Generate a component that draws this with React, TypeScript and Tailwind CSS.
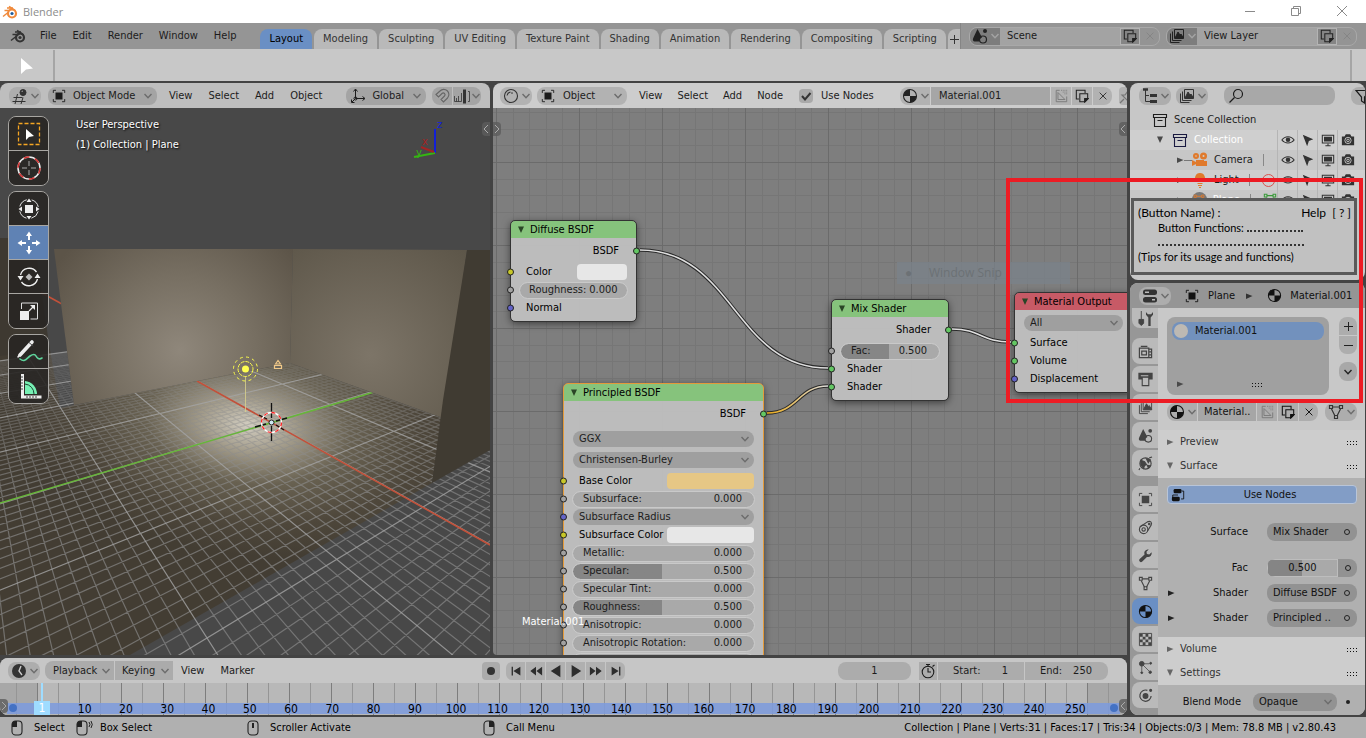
import React from "react";

/* ---------- icons (16 x 16 grid) ---------- */

const ICONS: Record<string, React.ReactNode> = {
  view3d: (
    <g fill="none" stroke="currentColor">
      <path d="M1.500 9.500h9M.5 13.500h13M5.500 6 3 16M11 9.500 9 16" />
      <circle cx="11" cy="4.500" r="3" fill="currentColor" />
      <path d="M9.500 4a2 2 0 0 1 1.500-1" stroke="#bbb" strokeWidth="0.8" />
    </g>
  ),
  object: (
    <g>
      <rect x="4" y="4" width="8" height="8" fill="currentColor" />
      <path d="M1.500 4.500v-3h3M11.500 1.500h3v3M14.500 11.500v3h-3M4.500 14.500h-3v-3" fill="none" stroke="currentColor" />
    </g>
  ),
  axes: (
    <g fill="none" stroke="currentColor">
      <path d="M5.500 1.500v9M5.500 10.500h9M5.500 10.500 2 14M3.500 3.500l2-2.500 2 2.500M12.500 8.500l2.500 2-2.500 2M1.500 11.500v3h3" />
      <circle cx="5.500" cy="10.500" r="1.500" />
    </g>
  ),
  magnet: (
    <g fill="none" stroke="currentColor" strokeWidth="1.1">
      <path d="M2 6.500 6 3a5 5 0 0 1 7.500 7L9.500 14l-2.500-2.500L10.500 8A1.600 1.600 0 0 0 8 5.500L4.500 9z" />
    </g>
  ),
  snap: (
    <g fill="none" stroke="currentColor">
      <path d="M14 3.500h1.500v10H14M.5 8v5.500h7V5M2.500 10v3.500M4.500 8v5.500" strokeWidth=".8" />
      <path d="M10.500 1.500v14" strokeWidth="3" />
    </g>
  ),
  shader: (
    <g fill="none" stroke="currentColor" strokeWidth="1.100">
      <circle cx="8" cy="8" r="6.500" />
      <path d="M4 7.500A4.500 4.500 0 0 1 7.500 4" />
      <circle cx="9" cy="5" r=".3" />
    </g>
  ),
  material: (
    <g>
      <circle cx="8" cy="8" r="6.500" fill="none" stroke="currentColor" strokeWidth="1.100" />
      <path d="M8 8V1.500A6.500 6.500 0 0 0 1.500 8zM8 8h6.500A6.500 6.500 0 0 1 8 14.500z" fill="currentColor" />
    </g>
  ),
  scene: (
    <g>
      <path d="M5.500 1 10 9.500a4 4 0 0 0-2.500 4H3.500c-3 0-3-2-2-4z" fill="currentColor" />
      <circle cx="11" cy="11.500" r="3.500" fill="none" stroke="currentColor" strokeWidth="1.200" />
      <circle cx="13" cy="3" r="2" fill="currentColor" />
    </g>
  ),
  layers: (
    <g fill="none" stroke="currentColor">
      <path d="M5.500 1.500h9v9h-9zM3.500 3.500v9h9M1.500 5.500v9h9" />
      <path d="m6 10 3-6 2 3 1-1 2.500 4z" fill="currentColor" />
    </g>
  ),
  copy: (
    <g fill="none" stroke="currentColor" strokeWidth="1.200">
      <path d="M4.500 11.500h-3v-10h10v3" />
      <path d="M5.500 5.500h9v6l-3 3h-6z" />
      <path d="M11 15v-4h4z" fill="currentColor" />
    </g>
  ),
  page: (
    <g fill="none" stroke="currentColor">
      <path d="M2.500 1.500v13h12v-6M2.500 1.500h4M4.500 4v8h8z" />
      <path d="M8 1.500h7M10 3.500h5M12 5.500h3" strokeDasharray="1 1" />
    </g>
  ),
  x: <path d="m3.500 3.500 9 9M12.500 3.500l-9 9" fill="none" stroke="currentColor" strokeWidth="1.300" />,
  pin: <path d="m8 1 6 6M9 3 6 7H3l6 6V9l4-3M5 11l-4 4" fill="none" stroke="currentColor" strokeWidth="1.200" />,
  tree: (
    <g fill="none" stroke="currentColor">
      <path d="M1 1.500h5" strokeWidth="2.500" />
      <path d="M3.500 2v11.500H8M3.500 7.500H7" />
      <path d="M8 7.500h7M8 13.500h7" strokeWidth="3" />
    </g>
  ),
  search: (
    <g fill="none" stroke="currentColor" strokeWidth="1.200">
      <circle cx="10" cy="6" r="4.500" />
      <path d="M6.500 9.500 1.500 14.500" />
    </g>
  ),
  filter: <path d="M1 2.500h14L9.500 9v6l-3-2V9z" fill="none" stroke="currentColor" strokeWidth="1.200" />,
  box: (
    <g fill="none" stroke="currentColor" strokeWidth="1.100">
      <path d="M1.500 2.500h13v3h-13zM2.500 5.500v9h11v-9M5.500 8.500h5" />
    </g>
  ),
  eye: (
    <g>
      <path d="M1 8c3.500-5 10.500-5 14 0-3.500 4.500-10.500 4.500-14 0z" fill="none" stroke="currentColor" strokeWidth="1.200" />
      <circle cx="8" cy="7.700" r="2.600" fill="currentColor" />
    </g>
  ),
  cursor: <path d="M2 2l12 5-5 2-2 6z" fill="currentColor" />,
  screen: (
    <g fill="none" stroke="currentColor" strokeWidth="1.200">
      <path d="M1.500 2.500h13v9h-13z" />
      <path d="M4 5h8v4H4z" fill="currentColor" />
      <path d="M5 14.500h6M8 12v2" />
    </g>
  ),
  camera: (
    <g>
      <path d="M1 4h3l1.500-2.500h5L12 4h3v10H1z" fill="currentColor" />
      <circle cx="8" cy="8.500" r="3.600" fill="none" stroke="#ccc" />
      <circle cx="8" cy="8.500" r="1.500" fill="none" stroke="#ccc" />
    </g>
  ),
  movie: (
    <g fill="currentColor">
      <circle cx="4" cy="4" r="3" />
      <circle cx="11.500" cy="4" r="3.500" />
      <path d="M4 8h8v6H4zM0 8l4 2v2l-4 2zM12 9h3v5h-3z" />
      <circle cx="4" cy="4" r=".8" fill="#ccc" />
      <circle cx="11.500" cy="4" r="1" fill="#ccc" />
    </g>
  ),
  bulb: (
    <g fill="currentColor">
      <path d="M8 1a5 5 0 0 1 3 9H5a5 5 0 0 1 3-9zM5.500 11h5v1h-5zM6 13h4v1H6zM7 15h2v1H7z" />
    </g>
  ),
  props: (
    <g fill="currentColor">
      <rect x="1" y="1.500" width="14" height="5.500" rx="2.500" />
      <rect x="1" y="9" width="14" height="5.500" rx="2.500" />
      <path d="M3 3.500h4v1.500H3zM10 11h3v1.500h-3z" fill="#bbb" />
    </g>
  ),
  tools: (
    <g>
      <path d="M3.500 0v9M1 9h5v4l-2.500 2.500L1 13z" fill="currentColor" stroke="currentColor" />
      <path d="M8.500 1v3l2.500 3v9h2.500V7L16 4V1l-2 2.500h-3.500z" fill="currentColor" />
    </g>
  ),
  render: (
    <g fill="none" stroke="currentColor" strokeWidth="1.300">
      <path d="M1.500 4.500h10v10h-10zM3 2.500h7M11.500 5.500h3v9h-3M12 8.500h2M12 11.500h2" />
      <path d="M4 7.500h5v4H4z" />
    </g>
  ),
  printer: (
    <g fill="none" stroke="currentColor" strokeWidth="1.200">
      <path d="M1 1.500h14v6H1z" fill="currentColor" />
      <path d="M4.500 5.500h7v9h-7z" fill="#bbb" />
      <path d="M3 4h8" stroke="#bbb" />
    </g>
  ),
  world: (
    <g fill="none" stroke="currentColor" strokeWidth="1.200">
      <circle cx="8" cy="8" r="6" />
      <path d="M3 4.500 7 6l2 3-2 1-1 3-3-4zM9 3l4 1-2 3zM10 10l3 .5-2 2zM12 2l3-1M2 13l-1 2" fill="currentColor" />
    </g>
  ),
  constraint: (
    <g fill="none" stroke="currentColor" strokeWidth="1.200">
      <circle cx="6" cy="10" r="4.500" />
      <circle cx="6" cy="10" r="1.800" />
      <path d="M2 7.500 10 2c3-1.500 5.500.5 4 3.500L10 12" />
      <circle cx="12" cy="4.200" r=".8" />
    </g>
  ),
  wrench: <path d="M10 1.500a4 4 0 0 0-3 5.500L1.500 12a2 2 0 0 0 2.800 2.700L9.500 9.500a4 4 0 0 0 5-5L12 7 9.500 6.500 9 4l2.500-2.500z" fill="currentColor" />,
  mesh: (
    <g fill="none" stroke="currentColor" strokeWidth="1.200">
      <path d="M4.500 3h7M3.500 5l3.500 7M12.500 5 9 12" />
      <path d="M1.500 1.500h3v3h-3zM11.500 1.500h3v3h-3zM6.500 11.500h3v3h-3z" />
    </g>
  ),
  checker: (
    <g>
      <path d="M1.500 1.500h13v13h-13z" fill="none" stroke="currentColor" />
      <path d="M2 2h3v3H2zM8 2h3v3H8zM5 5h3v3H5zM11 5h3v3h-3zM2 8h3v3H2zM8 8h3v3H8zM5 11h3v3H5zM11 11h3v3h-3z" fill="currentColor" />
    </g>
  ),
  particles: (
    <g fill="currentColor" stroke="currentColor">
      <circle cx="4" cy="4" r="2.500" />
      <path d="M4 4h8M4 4l8 8M4 4v8" strokeWidth=".8" fill="none" />
      <circle cx="13.500" cy="3.500" r="1" />
      <circle cx="13" cy="13" r="1.300" />
      <circle cx="4" cy="13.500" r="1" />
    </g>
  ),
  physics: (
    <g fill="none" stroke="currentColor" strokeWidth="1.300">
      <path d="M10 2.500a6 6 0 1 0 4 6" />
      <circle cx="8" cy="8.500" r="2.500" fill="currentColor" />
      <circle cx="13.500" cy="2.500" r="1" fill="currentColor" />
    </g>
  ),
  clock: (
    <g>
      <circle cx="8" cy="8" r="7" fill="currentColor" />
      <path d="M10 3 8 8l3 4" fill="none" stroke="#ccc" strokeWidth="1.400" />
    </g>
  ),
  stopwatch: (
    <g fill="none" stroke="currentColor" strokeWidth="1.100">
      <circle cx="8" cy="9" r="5.800" />
      <path d="M8 5v4h3M6 1.500h4M8 2v2M12.500 3.500l2-1.500" />
    </g>
  ),
  nodes: (
    <g fill="currentColor">
      <rect x="3" y="1" width="9" height="5" rx="1.500" />
      <rect x="1" y="10" width="9" height="5" rx="1.500" />
      <path d="M12.500 3.500h2v9h-3M2 12.500V8h6" fill="none" stroke="currentColor" />
    </g>
  ),
};

function Ico({ n, className = "size-4" }: { n: string; className?: string }) {
  return (
    <svg viewBox="0 0 16 16" className={`shrink-0 ${className}`} aria-hidden="true">
      {ICONS[n]}
    </svg>
  );
}

function Chev({ className = "text-[#6c6c6c]" }: { className?: string }) {
  return (
    <svg viewBox="0 0 8 6" className={`h-[6px] w-2 shrink-0 ${className}`} aria-hidden="true">
      <path d="m.5 1 3.500 3.800L7.500 1" fill="none" stroke="currentColor" strokeWidth="1.400" />
    </svg>
  );
}

function Tri({ open, className = "text-[#4a4a4a]" }: { open?: boolean; className?: string }) {
  return (
    <svg viewBox="0 0 8 8" className={`size-2 shrink-0 ${className}`} aria-hidden="true">
      <path d={open ? "M1 .5h6L4 7z" : "M1 1.500v5.500L7.500 4z"} fill="currentColor" />
    </svg>
  );
}

function BlenderLogo({ color }: { color?: boolean }) {
  const main = color ? "#f08a3c" : "#333333";
  return (
    <svg viewBox="0 0 16 14" className="h-[14px] w-4 shrink-0" aria-hidden="true">
      <path d="M1 11.500 8.500 5.500H2.500M5 3h6" fill="none" stroke={main} strokeWidth="1.500" />
      <path d="M7 1.500 13.500 6" stroke={main} strokeWidth="1.800" />
      <circle cx="10" cy="8.500" r="4" fill={color ? "#fff" : "none"} stroke={main} strokeWidth="2.200" />
      <circle cx="10" cy="8.500" r="1.600" fill={color ? "#1e5b9b" : main} />
    </svg>
  );
}

function IconDrop({ n, className = "" }: { n: string; className?: string }) {
  return (
    <button
      aria-label={n}
      className={`flex h-[18px] w-8 shrink-0 items-center justify-center gap-[3px] rounded-lg bg-[#adadad] text-[#333] ${className}`}
    >
      <Ico n={n} />
      <Chev />
    </button>
  );
}

function Pick({ label, value, className = "", pad = "pl-2" }: { label: string; value: string; className?: string; pad?: string }) {
  return (
    <span className={`relative flex items-center ${className}`}>
      <select aria-label={label} defaultValue={value} className={`size-full appearance-none bg-transparent outline-none ${pad}`}>
        <option>{value}</option>
      </select>
      <Chev className="pointer-events-none absolute right-[5px] text-[#6c6c6c]" />
    </span>
  );
}

/* ---------- top bars ---------- */

function TitleBar() {
  return (
    <header className="flex h-[23px] shrink-0 items-center bg-white pl-[2px] font-['Open_Sans',sans-serif] text-[11px] text-[#8c8c8c]">
      <BlenderLogo color />
      <span className="pl-[5px]">Blender</span>
      <div className="ml-auto flex items-center gap-9 pr-[19px] pb-[2px] text-[#8a8a8a]">
        <button aria-label="Minimize">
          <svg viewBox="0 0 10 10" className="size-[10px]"><path d="M0 5.500h10" stroke="currentColor" /></svg>
        </button>
        <button aria-label="Restore">
          <svg viewBox="0 0 10 10" className="size-[10px]">
            <path d="M.5 2.500h7v7h-7zM2.500 2.500v-2h7v7h-2" fill="none" stroke="currentColor" />
          </svg>
        </button>
        <button aria-label="Close">
          <svg viewBox="0 0 10 10" className="size-[10px]"><path d="m0 0 10 10M10 0 0 10" stroke="currentColor" /></svg>
        </button>
      </div>
    </header>
  );
}

const TABS = ["Layout", "Modeling", "Sculpting", "UV Editing", "Texture Paint", "Shading", "Animation", "Rendering", "Compositing", "Scripting"];

function IdField({ icon, value }: { icon: string; value: string }) {
  return (
    <div className="flex h-[19px] w-[191px] overflow-hidden rounded-lg border border-[#a9a9a9] bg-[#a3a3a3]">
      <button aria-label={`${value} menu`} className="flex w-[30px] items-center justify-center gap-[3px] bg-[#7d7d7d] text-[#222]">
        <Ico n={icon} />
        <Chev className="text-[#a4a4a4]" />
      </button>
      <input aria-label={icon} defaultValue={value} className="min-w-0 flex-1 bg-transparent pl-[7px] outline-none" />
      <button aria-label="Duplicate" className="flex w-5 items-center justify-center border border-[#b4b4b4] bg-[#858585] text-[#222]">
        <Ico n="copy" className="size-[14px]" />
      </button>
      <button aria-label="Remove" className="flex w-[19px] items-center justify-center bg-[#949494] text-[#858585]">
        <Ico n="x" className="size-3" />
      </button>
    </div>
  );
}

function MenuBar() {
  return (
    <div className="flex h-[26px] shrink-0 items-center bg-[#959595] text-[#1c1c1c]">
      <button aria-label="Blender" className="pl-[10px]"><BlenderLogo /></button>
      <nav className="flex gap-4 pl-[14px]">
        {["File", "Edit", "Render", "Window", "Help"].map((m) => (
          <button key={m}>{m}</button>
        ))}
      </nav>
      <div className="ml-6 flex min-w-0 gap-[2px] self-end overflow-hidden" role="tablist">
        {TABS.map((t, i) => (
          <button
            key={t}
            role="tab"
            aria-selected={i === 0}
            className={`h-5 shrink-0 rounded-t-lg px-[9px] whitespace-nowrap ${i === 0 ? "bg-[#6a8fc4] text-black" : "bg-[#b9b9b9] text-[#333]"}`}
          >
            {t}
          </button>
        ))}
        <button aria-label="Add workspace" className="flex h-5 w-[13px] shrink-0 items-center justify-center rounded-tl-lg bg-[#b9b9b9] text-[#333]">
          <svg viewBox="0 0 9 9" className="size-[9px]"><path d="M4.500 0v9M0 4.500h9" stroke="currentColor" /></svg>
        </button>
      </div>
      <div className="ml-auto flex h-full shrink-0 items-center gap-[6px] border-l border-[#858585] pr-[9px] pl-2">
        <IdField icon="scene" value="Scene" />
        <IdField icon="layers" value="View Layer" />
      </div>
    </div>
  );
}

function ToolSettings() {
  return (
    <div className="flex h-8 shrink-0 bg-[#c8c8c8] pt-px">
      <div className="flex w-[55px] items-center justify-center border-r-2 border-[#a5a5a5]">
        <svg viewBox="0 0 12 16" className="h-4 w-3"><path d="M0 0v16l5-4.500 7-1z" fill="#fff" /></svg>
      </div>
      <div className="mr-[14px] ml-auto border-r-2 border-[#a5a5a5]" />
    </div>
  );
}

/* ---------- 3D viewport ---------- */

/* Perspective of the floor grid: corners of a 2 x 2 cell square on screen. */
function project(u: number, v: number): [number, number, number] {
  const [x0, y0, x1, y1, x2, y2, x3, y3] = [207, 638, 423, 507, 271, 422, 102, 473];
  const dx1 = x1 - x2, dx2 = x3 - x2, sx = x0 - x1 + x2 - x3;
  const dy1 = y1 - y2, dy2 = y3 - y2, sy = y0 - y1 + y2 - y3;
  const det = dx1 * dy2 - dx2 * dy1;
  const g = (sx * dy2 - dx2 * sy) / det;
  const h = (dx1 * sy - sx * dy1) / det;
  const s = u / 2, t = (v + 1) / 2;
  const w = g * s + h * t + 1;
  return [(x1 - x0 + g * x1) * s + (x3 - x0 + h * x3) * t + x0, (y1 - y0 + g * y1) * s + (y3 - y0 + h * y3) * t + y0, w];
}

function segment(a: [number, number], b: [number, number]) {
  let p = project(...a);
  let q = project(...b);
  const eps = 0.15;
  if (p[2] < eps && q[2] < eps) return "";
  const mix = (m: number[], n: number[]): [number, number, number] => {
    const k = (eps - m[2]) / (n[2] - m[2]);
    return [m[0] + (n[0] - m[0]) * k, m[1] + (n[1] - m[1]) * k, eps];
  };
  if (p[2] < eps) p = mix(p, q);
  else if (q[2] < eps) q = mix(q, p);
  return `M${(p[0] / p[2]).toFixed(1)} ${(p[1] / p[2]).toFixed(1)}L${(q[0] / q[2]).toFixed(1)} ${(q[1] / q[2]).toFixed(1)}`;
}

let minorGrid = "";
let majorGrid = "";
for (let i = -60; i <= 60; i++) {
  const k = i / 10;
  const d = segment([k, -6], [k, 6]) + segment([-6, k], [6, k]);
  if (i % 10 === 0) majorGrid += d;
  else minorGrid += d;
}

function Scene3D() {
  return (
    <svg viewBox="0 108 490 547" preserveAspectRatio="xMidYMid slice" className="absolute inset-0 size-full" aria-hidden="true">
      <defs>
        <radialGradient id="wallL" gradientUnits="userSpaceOnUse" cx="180" cy="350" r="150">
          <stop offset="0" stopColor="#8f877b" />
          <stop offset=".5" stopColor="#776f62" />
          <stop offset="1" stopColor="#5c5448" />
        </radialGradient>
        <radialGradient id="wallR" gradientUnits="userSpaceOnUse" cx="370" cy="355" r="140">
          <stop offset="0" stopColor="#7d7568" />
          <stop offset="1" stopColor="#5d5649" />
        </radialGradient>
        <radialGradient id="floor" gradientUnits="userSpaceOnUse" cx="0" cy="0" r="1" gradientTransform="translate(248 425) rotate(8) scale(230 130)">
          <stop offset="0" stopColor="#d2cdc0" />
          <stop offset=".2" stopColor="#a39c8b" />
          <stop offset=".45" stopColor="#686151" />
          <stop offset=".75" stopColor="#4e473b" />
          <stop offset="1" stopColor="#433d33" />
        </radialGradient>
        <linearGradient id="depth" gradientUnits="userSpaceOnUse" x1="0" y1="360" x2="0" y2="500">
          <stop offset="0" stopColor="#8c8c8c" stopOpacity=".25" />
          <stop offset="1" stopColor="#8c8c8c" stopOpacity=".65" />
        </linearGradient>
        <clipPath id="ground">
          <path d="M38 258h17l19 147 216-42 153 55-11 65 58-33v205H0V356l46-10z" />
        </clipPath>
      </defs>
      <rect x="0" y="108" width="490" height="547" fill="#484848" />
      <path d="M0 238h34l24 170-58 50z" fill="#3e3931" />
      <path d="M0 356 50 350 60 408 74 405 290 363 443 418 432 483 130 655H0z" fill="url(#floor)" />
      <g clipPath="url(#ground)" fill="none">
        <path d={minorGrid} stroke="url(#depth)" strokeWidth="1.200" />
        <path d={majorGrid} stroke="#a4a4a4" strokeOpacity=".8" strokeWidth="1.200" />
        <path d="M0 503 348 400 374 392" stroke="#67b53a" strokeWidth="1.600" />
        <path d="M197 381 490 545M40 292l22 12" stroke="#c2513a" strokeWidth="1.600" />
      </g>
      <path d="M54 249h239l-3 114L74 405z" fill="url(#wallL)" />
      <path d="M293 249l174 1-24 168-153-55z" fill="url(#wallR)" />
      <path d="M467 250h23v200l-58 33 11-83z" fill="#403b32" />
      <path d="M245.500 376v36" stroke="#d9d28b" strokeWidth=".8" />
      <circle cx="245.500" cy="369" r="3.500" fill="#ffff50" />
      <g fill="none" stroke="#fafa4c">
        <circle cx="245.500" cy="369" r="7.500" strokeDasharray="4 1" />
        <circle cx="245.500" cy="369" r="12" strokeDasharray="3 3.300" />
      </g>
      <path d="M274.500 365.500h7v3h-7zM275.500 364l2.500-3.500 2.500 3.500z" fill="none" stroke="#f0c888" strokeWidth="1.200" />
      <path d="M271.500 403v15M271.500 426v15M255 427l11-3M276 421l11-3M259 415l8 4M276 425l8 5" stroke="#111" strokeWidth="1.300" />
      <circle cx="271.500" cy="422.500" r="10" fill="none" stroke="#fff" strokeWidth="1.300" />
      <circle cx="271.500" cy="422.500" r="10" fill="none" stroke="#f22" strokeWidth="1.300" strokeDasharray="3.900 3.900" />
      <circle cx="271.500" cy="422.500" r="2.500" fill="#cfeaf4" stroke="#222" />
      <g fill="none" strokeWidth="2">
        <path d="M435 153v-24" stroke="#1220d8" />
        <path d="m435 153-21 4" stroke="#35b512" />
        <path d="m434 152-13-5" stroke="#a32424" />
      </g>
      <g fontFamily="DejaVu Sans" fontSize="10">
        <text x="437" y="128" fill="#1220d8">z</text>
        <text x="422" y="145" fill="#a32424">x</text>
        <text x="416" y="156" fill="#35b512">y</text>
      </g>
    </svg>
  );
}

const TOOL_ART: Record<string, React.ReactNode> = {
  "Select Box": (
    <g>
      <path d="M3.500 3.500h21v21h-21z" fill="none" stroke="#f5a623" strokeWidth="1.300" strokeDasharray="4 2" />
      <path d="M11 9v11l3-3 5-1z" fill="#fff" />
    </g>
  ),
  Cursor: (
    <g fill="none">
      <circle cx="14" cy="14" r="11" stroke="#eee" strokeWidth="1.500" />
      <circle cx="14" cy="14" r="11" stroke="#d32f2f" strokeWidth="1.500" strokeDasharray="5.760 5.760" />
      <path d="M14 7v5M14 16v5M7 14h5M16 14h5" stroke="#aaa" />
    </g>
  ),
  Transform: (
    <g>
      <circle cx="14" cy="14" r="9.500" fill="none" stroke="#e4e4e4" strokeDasharray="9.900 5" strokeDashoffset="-2.500" />
      <path d="M10 10h8v8h-8zM11.500 7 14 3.500 16.500 7zM11.500 21 14 24.500 16.500 21zM7 11.500 3.500 14 7 16.500zM21 11.500 24.500 14 21 16.500z" fill="#eee" />
    </g>
  ),
  Move: (
    <g>
      <path d="M11 7 14 2.500 17 7zM11 21 14 25.500 17 21zM7 11 2.500 14 7 17zM21 11 25.500 14 21 17z" fill="#fff" />
      <path d="M14 7v4M14 17v4M7 14h4M17 14h4" stroke="#fff" strokeWidth="2" />
    </g>
  ),
  Rotate: (
    <g>
      <path d="M5.500 12a9 9 0 0 1 16-3M22.500 16a9 9 0 0 1-16 3" fill="none" stroke="#eee" strokeWidth="1.300" />
      <path d="M2.500 13h6L5.500 17.500zM19.500 15h6L22.500 10.500z" fill="#eee" />
      <path d="m14 10.500 3.500 3.500-3.500 3.500-3.500-3.500z" fill="#bbb" />
    </g>
  ),
  Scale: (
    <g>
      <path d="M6.500 12V6h16v16h-7" fill="none" stroke="#ddd" />
      <path d="M5 14h9v9H5zM20 8v5l-5-5z" fill="#eee" />
      <path d="m14 14 5-5" stroke="#eee" strokeWidth="1.300" />
    </g>
  ),
  Annotate: (
    <g fill="none" strokeLinecap="round">
      <path d="M5 17 17 4" stroke="#eee" strokeWidth="3.600" />
      <path d="m14 4.500 4 3.500" stroke="#444" />
      <path d="m3 19 2-3" stroke="#eee" strokeWidth="1.500" />
      <path d="M5 21c5 4 7-1 10-3s5-2 6 0 3 4 6 2" stroke="#5fd49c" strokeWidth="1.600" />
    </g>
  ),
  Measure: (
    <g>
      <path d="M10 9a13 13 0 0 1 12 13H10z" fill="#76f0b4" />
      <path d="M10 12a10 10 0 0 1 9 10" fill="none" stroke="#1d4433" />
      <path d="M7.500 2v23h19" fill="none" stroke="#eee" strokeWidth="3" />
      <path d="M6 5h2M6 8h2M6 11h2M6 14h2M6 17h2M12 26v-2M15 26v-2M18 26v-2M21 26v-2" stroke="#444" />
    </g>
  ),
};

const TOOL_GROUPS = [["Select Box", "Cursor"], ["Transform", "Move", "Rotate", "Scale"], ["Annotate", "Measure"]];

function Toolbar() {
  return (
    <div className="absolute top-2 left-2 flex flex-col gap-[5px]">
      {TOOL_GROUPS.map((g) => (
        <div key={g[0]} className="w-[41px] divide-y divide-[#a8a6a2] overflow-hidden rounded-lg border border-[#a8a6a2]">
          {g.map((t) => (
            <button
              key={t}
              aria-label={t}
              className={`flex h-[34px] w-full items-center justify-center ${t === "Move" ? "bg-[#5f82b4]" : "bg-[#282623]/90"}`}
            >
              <svg viewBox="0 0 28 28" className="size-7">{TOOL_ART[t]}</svg>
            </button>
          ))}
        </div>
      ))}
    </div>
  );
}

function Edge({ side, className }: { side: "left" | "right"; className: string }) {
  return (
    <button
      aria-label={side === "left" ? "Show tools" : "Show sidebar"}
      className={`absolute flex h-[14px] w-2 items-center justify-center bg-[#5c5c5c]/80 ${className}`}
    >
      <svg viewBox="0 0 6 8" className="h-2 w-[6px]">
        <path d={side === "left" ? "m1 0 4 4-4 4" : "M5 0 1 4l4 4"} fill="none" stroke="#aaa" />
      </svg>
    </button>
  );
}

function Viewport() {
  return (
    <section className="flex min-w-0 flex-[490] flex-col overflow-hidden rounded-t-lg">
      <div className="flex h-[25px] shrink-0 items-center bg-[#bebebe] pl-[9px] text-[#1c1c1c]">
        <IconDrop n="view3d" className="bg-[#a4a4a4]" />
        <div className="ml-[7px] flex h-[18px] w-[109px] shrink-0 items-center rounded-lg bg-[#a4a4a4] pl-1">
          <Ico n="object" className="size-[14px]" />
          <Pick label="Mode" value="Object Mode" className="h-full flex-1" pad="pl-[7px]" />
        </div>
        <nav className="flex gap-4 pl-3">
          {["View", "Select", "Add", "Object"].map((m) => (
            <button key={m}>{m}</button>
          ))}
        </nav>
        <div className="ml-6 flex h-[18px] w-20 shrink-0 items-center rounded-lg bg-[#a4a4a4] pl-1">
          <Ico n="axes" />
          <Pick label="Orientation" value="Global" className="h-full flex-1" pad="pl-[6px]" />
        </div>
        <div className="ml-[6px] flex h-[18px] shrink-0 gap-px overflow-hidden rounded-lg">
          <button aria-label="Snap" className="flex w-5 items-center justify-center bg-[#a4a4a4] text-[#666]"><Ico n="magnet" /></button>
          <button aria-label="Snap to" className="flex w-7 items-center justify-center gap-[2px] bg-[#a4a4a4] text-[#333]"><Ico n="snap" /><Chev /></button>
        </div>
      </div>
      <div className="relative min-h-0 flex-1 overflow-hidden">
        <Scene3D />
        <div className="absolute top-[7px] left-[76px] leading-5 text-white [text-shadow:1px_1px_2px_#000]">
          <p>User Perspective</p>
          <p>(1) Collection | Plane</p>
        </div>
        <Toolbar />
        <Edge side="right" className="top-[14px] right-0 rounded-l" />
      </div>
    </section>
  );
}

/* ---------- node editor ---------- */

const SOCKET = { green: "bg-[#63c763]", yellow: "bg-[#c7c729]", gray: "bg-[#a1a1a1]", blue: "bg-[#6363c7]" };
type Sock = keyof typeof SOCKET;

function Socket({ c, out }: { c: Sock; out?: boolean }) {
  return (
    <span className={`absolute top-1/2 size-[7px] -translate-y-1/2 rounded-full border border-[#222] ${SOCKET[c]} ${out ? "-right-1" : "-left-1"}`} />
  );
}

function Node({ title, tone = "bg-[#86c37c]", className, selected, children }: { title: string; tone?: string; className: string; selected?: boolean; children: React.ReactNode }) {
  return (
    <article className={`absolute rounded bg-[#c0c0c0]/95 text-black shadow-[0_2px_8px_rgba(0,0,0,0.6)] outline ${selected ? "outline-[#e39a3a]" : "outline-[#333]"} ${className}`}>
      <h2 className={`flex h-[17px] items-center gap-[5px] rounded-t pl-[6px] ${tone}`}>
        <Tri open className="text-[#2a4527]" />
        {title}
      </h2>
      {children}
    </article>
  );
}

function Out({ label }: { label: string }) {
  return (
    <div className="relative flex h-[25px] items-center justify-end pr-[17px]">
      {label}
      <Socket c="green" out />
    </div>
  );
}

function Plain({ label, c, color }: { label: string; c: Sock; color?: string }) {
  return (
    <div className="relative flex h-[18px] items-center justify-between pr-[9px] pl-[15px]">
      <Socket c={c} />
      <span>{label}</span>
      {color && <button aria-label={`${label} swatch`} className={`h-4 rounded ${color}`} />}
    </div>
  );
}

function NumRow({ label, value, fill, center }: { label: string; value: string; fill?: boolean; center?: boolean }) {
  return (
    <div className="relative flex h-[18px] items-center px-[9px]">
      <Socket c="gray" />
      <label className={`flex h-[15px] w-full items-center rounded-lg text-[#1c1c1c] outline outline-[#c9c9c9] ${center ? "pl-[9px]" : "pl-[10px]"} ${fill ? "bg-linear-to-r from-[#868686] from-49% to-[#a9a9a9] to-49%" : "bg-[#a9a9a9]"}`}>
        <span className="whitespace-nowrap">{label}</span>
        <input defaultValue={value} className={`min-w-0 flex-1 bg-transparent outline-none ${center ? "pl-[3px]" : "pr-3 text-right"}`} />
      </label>
    </div>
  );
}

function DropRow({ value, c, tall }: { value: string; c?: Sock; tall?: boolean }) {
  return (
    <div className={`relative flex items-center px-[9px] ${tall ? "h-[21px]" : "h-[18px]"}`}>
      {c && <Socket c={c} />}
      <Pick label={value} value={value} className="h-4 w-full rounded-lg bg-[#9f9f9f] text-[#1c1c1c]" pad="pl-[6px]" />
    </div>
  );
}

function NodeCanvas() {
  return (
    <div className="relative min-h-0 flex-1 overflow-hidden rounded-bl bg-[#7e7e7e]">
      <svg className="absolute inset-0 size-full" aria-hidden="true">
        <defs>
          <pattern id="ngrid" patternUnits="userSpaceOnUse" x="86" y="54" width="83" height="83">
            <path d="M17.500 0v83M33.500 0v83M50.500 0v83M66.500 0v83M0 17.500h83M0 33.500h83M0 50.500h83M0 66.500h83" stroke="#767676" />
            <path d="M.5 0v83M0 .5h83" stroke="#6b6b6b" />
          </pattern>
          <linearGradient id="sel" x1="0" x2="1">
            <stop offset="0" stopColor="#eaaa18" />
            <stop offset="1" stopColor="#dedede" />
          </linearGradient>
        </defs>
        <rect width="100%" height="100%" fill="url(#ngrid)" />
      </svg>
      <div className="absolute top-[154px] left-[404px] flex h-[22px] w-[173px] items-center bg-[#7a838b]/70 pl-2 font-['Open_Sans',sans-serif] text-xs text-[#6c7175]">
        <span className="w-6">●</span>Window Snip
      </div>

      <Node title="Diffuse BSDF" className="top-[113px] left-[18px] h-[100px] w-[125px]">
        <Out label="BSDF" />
        <Plain label="Color" c="yellow" color="w-[50px] bg-[#e7e7e7]" />
        <NumRow label="Roughness:" value="0.000" center />
        <Plain label="Normal" c="blue" />
      </Node>

      <Node title="Mix Shader" className="top-[192px] left-[339px] h-[100px] w-[116px]">
        <Out label="Shader" />
        <NumRow label="Fac:" value="0.500" fill />
        <Plain label="Shader" c="green" />
        <Plain label="Shader" c="green" />
      </Node>

      <Node title="Material Output" tone="bg-[#c75a66]" className="top-[185px] left-[522px] h-[99px] w-[117px]">
        <div className="pt-[2px] pb-px">
          <DropRow value="All" tall />
        </div>
        <Plain label="Surface" c="green" />
        <Plain label="Volume" c="green" />
        <Plain label="Displacement" c="blue" />
      </Node>

      <Node title="Principled BSDF" selected className="top-[276px] left-[71px] w-[199px] pb-2">
        <Out label="BSDF" />
        <div className="pt-[2px] pb-[2px]">
          <DropRow value="GGX" tall />
          <DropRow value="Christensen-Burley" tall />
        </div>
        <Plain label="Base Color" c="yellow" color="w-[87px] bg-[#e6c785]" />
        <NumRow label="Subsurface:" value="0.000" />
        <DropRow value="Subsurface Radius" c="blue" />
        <Plain label="Subsurface Color" c="yellow" color="w-[87px] bg-[#e7e7e7]" />
        <NumRow label="Metallic:" value="0.000" />
        <NumRow label="Specular:" value="0.500" fill />
        <NumRow label="Specular Tint:" value="0.000" />
        <NumRow label="Roughness:" value="0.500" fill />
        <NumRow label="Anisotropic:" value="0.000" />
        <NumRow label="Anisotropic Rotation:" value="0.000" />
        <NumRow label="Sheen:" value="0.000" />
      </Node>

      <svg className="pointer-events-none absolute inset-0 size-full" aria-hidden="true">
        <g fill="none" stroke="#2a2a2a" strokeWidth="3.600">
          <path d="M147 142C241 142 241 260 335 260" />
          <path d="M274 305C305 305 305 278 335 278" />
          <path d="M459 221C488 221 488 234 518 234" />
        </g>
        <g fill="none" stroke="#dedede" strokeWidth="1.600">
          <path d="M147 142C241 142 241 260 335 260" />
          <path d="M274 305C305 305 305 278 335 278" stroke="url(#sel)" />
          <path d="M459 221C488 221 488 234 518 234" />
        </g>
      </svg>
      <p className="absolute top-[507px] left-[29px] text-white">Material.001</p>
      <Edge side="left" className="top-[14px] left-0 rounded-r" />
      <Edge side="right" className="top-[14px] right-0 rounded-l" />
    </div>
  );
}

function NodeEditor() {
  return (
    <section className="flex min-w-0 flex-[634] flex-col overflow-hidden rounded-t-lg">
      <div className="flex h-[25px] shrink-0 items-center overflow-hidden bg-[#cdcdcd] pl-[7px] text-[#1c1c1c]">
        <IconDrop n="shader" className="bg-[#b2b2b2]" />
        <div className="ml-[5px] flex h-[18px] w-[90px] shrink-0 items-center rounded-lg bg-[#b2b2b2] pl-1">
          <Ico n="object" className="size-[14px]" />
          <Pick label="Shader type" value="Object" className="h-full flex-1" pad="pl-[8px]" />
        </div>
        <nav className="flex gap-[15px] pl-3">
          {["View", "Select", "Add", "Node"].map((m) => (
            <button key={m}>{m}</button>
          ))}
        </nav>
        <label className="ml-4 flex shrink-0 items-center gap-2">
          <span className="relative flex size-[14px]">
            <input type="checkbox" defaultChecked className="size-full appearance-none rounded bg-[#a9a9a9]" />
            <svg viewBox="0 0 14 14" className="pointer-events-none absolute inset-0"><path d="m3 7 3 3.500L11.500 4" fill="none" stroke="#333" strokeWidth="2" /></svg>
          </span>
          Use Nodes
        </label>
        <div className="ml-auto flex h-[18px] shrink-0 gap-px overflow-hidden rounded-lg">
          <button aria-label="Material" className="flex w-[30px] items-center justify-center gap-[3px] bg-[#b2b2b2] text-[#222]"><Ico n="material" /><Chev /></button>
          <input aria-label="Material name" defaultValue="Material.001" className="w-[119px] bg-[#a6a6a6] pl-2 outline-none" />
          <button aria-label="Fake user" className="flex w-5 items-center justify-center bg-[#b2b2b2] text-[#777]"><Ico n="page" className="size-[14px]" /></button>
          <button aria-label="Duplicate" className="flex w-5 items-center justify-center bg-[#b2b2b2] text-[#222]"><Ico n="copy" className="size-[14px]" /></button>
          <button aria-label="Unlink" className="flex w-[19px] items-center justify-center bg-[#b2b2b2] text-[#333]"><Ico n="x" className="size-3" /></button>
        </div>
        <button aria-label="Pin" className="ml-[7px] h-[18px] w-2 shrink-0 overflow-hidden rounded-l bg-[#b2b2b2] text-[#777]"><Ico n="pin" /></button>
      </div>
      <NodeCanvas />
    </section>
  );
}

/* ---------- timeline ---------- */

const MARKS = Array.from({ length: 25 }, (_, i) => (i + 1) * 10);
const PLAY: [string, string][] = [
  ["Jump to start", "M3 3h1.500v10H3zM13 3v10L5 8z"],
  ["Previous keyframe", "M8 3v10L1.500 8zM15 3v10L8.500 8z"],
  ["Play reverse", "M13 1v14L2 8z"],
  ["Play", "M3 1v14l11-7z"],
  ["Next keyframe", "M1 3v10l6.500-5zM8 3v10l6.500-5z"],
  ["Jump to end", "M11.500 3H13v10h-1.500zM3 3v10l8-5z"],
];

function Timeline() {
  return (
    <section className="shrink-0 overflow-hidden rounded-lg bg-[#b8b8b8]">
      <div className="flex h-[25px] items-center bg-[#c6c6c6] pl-2 text-[#1c1c1c]">
        <IconDrop n="clock" />
        <div className="ml-[5px] flex h-[19px] gap-px overflow-hidden rounded-l-lg">
          <button className="flex w-[69px] items-center justify-between bg-[#ababab] pr-1 pl-2">Playback<Chev /></button>
          <button className="flex w-[58px] items-center justify-between bg-[#ababab] pr-1 pl-[7px]">Keying<Chev /></button>
        </div>
        <nav className="flex gap-4 pl-2">
          <button>View</button>
          <button>Marker</button>
        </nav>
        <div className="ml-auto flex h-[18px] items-center">
          <button aria-label="Auto keying" className="mr-[6px] flex h-full w-[18px] items-center justify-center rounded bg-[#ababab]">
            <span className="size-2 rounded-full bg-[#333]" />
          </button>
          <div className="mr-[213px] flex h-full gap-px overflow-hidden rounded-md">
            {PLAY.map(([name, d]) => (
              <button key={name} aria-label={name} className="flex w-[19px] items-center justify-center bg-[#b0b0b0]">
                <svg viewBox="0 0 16 16" className="size-[14px]"><path d={d} fill="#2d2d2d" /></svg>
              </button>
            ))}
          </div>
          <input aria-label="Current frame" defaultValue="1" className="h-full w-[73px] rounded-lg bg-[#acacac] text-center outline-none" />
          <div className="mr-[19px] ml-2 flex h-full gap-px overflow-hidden rounded-r-lg">
            <button aria-label="Use preview range" className="flex w-[18px] items-center justify-center bg-[#acacac]"><Ico n="stopwatch" /></button>
            <label className="flex w-[86px] items-center bg-[#acacac] pl-[15px]">Start:<input defaultValue="1" className="min-w-0 flex-1 bg-transparent pr-4 text-right outline-none" /></label>
            <label className="flex w-[83px] items-center bg-[#acacac] pl-[15px]">End:<input defaultValue="250" className="min-w-0 flex-1 bg-transparent pr-4 text-right outline-none" /></label>
          </div>
        </div>
      </div>
      <div className="relative">
        <svg viewBox="0 0 1127 32" preserveAspectRatio="none" className="block h-8 w-full" aria-hidden="true">
          <rect width="1127" height="32" fill="#b8b8b8" />
          <rect width="37" height="32" fill="#a8a8a8" />
          <rect x="1087" width="40" height="32" fill="#a8a8a8" />
          <path d={MARKS.map((_, i) => `M${79.500 + i * 42} 0v32`).join("") + "M37.500 0v32"} stroke="#7d7d7d" />
          <path d={MARKS.map((_, i) => `M${58.500 + i * 42} 0v32`).join("") + "M16.500 0v32M1108.500 0v32"} stroke="#959595" />
          <rect x="7" y="20" width="1113" height="11" fill="#7d9bdc" fillOpacity=".88" />
          <circle cx="13" cy="25" r="4" fill="#4472c4" />
          <circle cx="1114" cy="25" r="4" fill="#4472c4" />
          <rect x="41" width="2" height="20" fill="#9fdcff" />
        </svg>
        <div className="absolute right-[31px] bottom-0 left-16 flex h-3 items-center text-black">
          {MARKS.map((m) => (
            <span key={m} className="flex-1 text-center text-xs leading-3">{m}</span>
          ))}
        </div>
        <span className="absolute bottom-0 left-[34px] h-[14px] w-4 bg-[#9fdcff] text-center text-xs leading-[15px] text-white">1</span>
        <Edge side="left" className="bottom-[2px] left-0 rounded-r" />
        <Edge side="right" className="right-0 bottom-[2px] rounded-l" />
      </div>
    </section>
  );
}

/* ---------- outliner ---------- */

function Toggles() {
  return (
    <div className="ml-auto flex h-full pr-2 text-[#333]">
      {["eye", "cursor", "screen", "camera"].map((n) => (
        <button key={n} aria-label={n} className="flex w-5 items-center justify-center border-l border-[#b5b5b5]"><Ico n={n} className="size-[14px]" /></button>
      ))}
    </div>
  );
}

function Tooltip() {
  return (
    <aside className="absolute top-[115px] right-2 left-px h-[77px] border-[3px] border-[#5a5a5a] bg-[#c1c1c1] pt-1 pr-[3px] pl-1 font-[Lato,sans-serif] text-[11px] leading-[15px] text-black">
      <p className="flex justify-between text-xs leading-[15px] whitespace-nowrap"><span>(Button Name) :</span><span>Help&nbsp; [ ? ]</span></p>
      <p className="flex items-baseline gap-[3px] pl-5 whitespace-nowrap">Button Functions:<i className="w-14 border-b-2 border-dotted border-[#333]" /></p>
      <p className="h-[14px] pl-5"><i className="block h-[11px] w-[146px] border-b-2 border-dotted border-[#333]" /></p>
      <p className="whitespace-nowrap">(Tips for its usage and functions)</p>
    </aside>
  );
}

function Outliner() {
  return (
    <section className="relative h-[197px] shrink-0 overflow-hidden rounded-lg bg-[#c7c7c7] text-[#1c1c1c]">
      <div className="flex h-[25px] items-center pl-[9px]">
        <IconDrop n="tree" />
        <IconDrop n="layers" className="ml-[5px]" />
        <label className="ml-4 flex h-[19px] w-[111px] shrink-0 items-center rounded-lg bg-[#a8a8a8] pl-1">
          <Ico n="search" />
          <input aria-label="Filter" className="min-w-0 flex-1 bg-transparent outline-none" />
        </label>
        <button aria-label="Filter options" className="ml-4 flex h-[18px] w-[30px] shrink-0 items-center rounded-lg bg-[#adadad] pl-1"><Ico n="filter" /></button>
      </div>
      <ul className="pt-[2px]">
        <li className="flex h-5 items-center pl-[22px]"><Ico n="box" /><span className="pl-[6px]">Scene Collection</span></li>
        <li className="flex h-5 items-center bg-[#cfcfcf] pl-[26px] text-white"><Tri open /><Ico n="box" className="ml-2 size-4 text-[#1a1a40]" /><span className="pl-[6px]">Collection</span><Toggles /></li>
        <li className="flex h-5 items-center pl-[46px]"><Tri /><i className="w-2 border-t border-[#777]" /><Ico n="movie" className="size-4 text-[#e07a2c]" /><span className="pl-[6px]">Camera</span><i className="ml-[10px] h-3 border-l border-[#888]" /><Toggles /></li>
        <li className="flex h-5 items-center bg-[#cfcfcf] pl-[46px]"><Tri /><Ico n="bulb" className="ml-2 size-4 text-[#e07a2c]" /><span className="pl-[6px]">Light</span><i className="mr-3 ml-[10px] h-3 border-l border-[#888]" /><i className="size-[13px] rounded-full border border-[#d9534f]" /><Toggles /></li>
        <li className="flex h-5 items-center pl-[46px] text-white"><Tri /><span className="ml-2 flex size-4 items-center justify-center rounded-full bg-[#777]"><Ico n="mesh" className="size-3 text-[#e07a2c]" /></span><span className="pl-[6px]">Plane</span><i className="mr-3 ml-[10px] h-3 border-l border-[#888]" /><Ico n="mesh" className="size-[14px] text-[#3a9a3a]" /><Toggles /></li>
      </ul>
      <Tooltip />
    </section>
  );
}

/* ---------- properties ---------- */

const PROP_TABS = ["tools", "", "render", "printer", "layers", "scene", "world", "", "object", "constraint", "wrench", "mesh", "material", "checker", "particles", "physics"];

function Panel({ title, open }: { title: string; open?: boolean }) {
  return (
    <h3 className="flex h-6 shrink-0 items-center bg-[#cdcdcd] pr-[7px] pl-2 text-[#333]">
      <Tri open={open} className="text-[#666]" />
      <span className="pl-[6px]">{title}</span>
      <Grip className="ml-auto" />
    </h3>
  );
}

function Grip({ className = "" }: { className?: string }) {
  return (
    <svg viewBox="0 0 12 5" className={`h-[5px] w-3 shrink-0 ${className}`} aria-hidden="true">
      <path d="M1 1.500h11M1 4.500h11" stroke="#111" strokeDasharray="1 2" />
    </svg>
  );
}

function LinkRow({ label, value, arrow }: { label: string; value: string; arrow?: boolean }) {
  return (
    <div className="flex h-[25px] items-center">
      {arrow ? <Tri className="text-[#222]" /> : <span className="w-2" />}
      <span className="w-[73px] text-right">{label}</span>
      <button className="ml-[19px] flex h-[18px] w-[90px] items-center justify-between rounded-lg bg-[#929292] pr-[7px] pl-[6px] whitespace-nowrap">
        {value}
        <i className="size-[6px] shrink-0 rounded-full border border-[#222]" />
      </button>
    </div>
  );
}

function Properties() {
  return (
    <section className="flex min-h-0 flex-1 flex-col overflow-hidden rounded-lg bg-[#c8c8c8] text-[#111]">
      <div className="flex h-[25px] shrink-0 items-center bg-[#959595] pl-[9px]">
        <IconDrop n="props" className="bg-[#7f7f7f]" />
        <Ico n="object" className="ml-[14px] size-[14px]" />
        <span className="pl-[9px]">Plane</span>
        <Tri className="ml-[10px] text-[#333]" />
        <Ico n="material" className="ml-[14px] size-[15px]" />
        <span className="pl-2">Material.001</span>
      </div>
      <div className="flex min-h-0 flex-1">
        <div className="flex w-7 shrink-0 flex-col gap-[2px] overflow-hidden bg-[#979797] pl-[2px] text-[#444]">
          {PROP_TABS.map((t, i) =>
            t === "" ? (
              <span key={i} className="h-[6px] shrink-0" />
            ) : (
              <button
                key={i}
                aria-label={t}
                className={`flex shrink-0 items-center justify-center rounded-l-lg ${i === 0 ? "h-5 rounded-tl-none" : "h-[26px]"} ${t === "material" ? "bg-[#6a8fc4] text-[#111]" : "bg-[#bababa]"}`}
              >
                <Ico n={t} className="size-[15px]" />
              </button>
            ),
          )}
        </div>
        <div className="flex min-w-0 flex-1 flex-col overflow-hidden">
          <div className="flex gap-[10px] pt-[9px] pr-2 pl-[9px]">
            <div className="flex h-[78px] flex-1 flex-col justify-between rounded-lg bg-[#a0a0a0] p-[5px] pb-[7px]">
              <button className="flex h-[18px] items-center rounded-lg bg-[#7291bd] pl-[2px]">
                <i className="size-[14px] rounded-full bg-[#bdb9b3]" />
                <span className="pl-[7px]">Material.001</span>
              </button>
              <div className="flex items-center pr-[61px] pl-1"><Tri /><Grip className="ml-auto" /></div>
            </div>
            <div className="flex w-[18px] flex-col">
              <button aria-label="Add slot" className="mb-px flex h-[18px] items-center justify-center rounded-t-lg bg-[#adadad]">
                <svg viewBox="0 0 9 9" className="size-[9px]"><path d="M4.500 0v9M0 4.500h9" stroke="#222" /></svg>
              </button>
              <button aria-label="Remove slot" className="flex h-[18px] items-center justify-center rounded-b-lg bg-[#adadad]">
                <svg viewBox="0 0 9 9" className="size-[9px]"><path d="M0 4.500h9" stroke="#222" /></svg>
              </button>
              <button aria-label="Slot options" className="mt-2 flex h-[19px] items-center justify-center rounded-lg bg-[#a8a8a8]"><Chev className="text-[#222]" /></button>
            </div>
          </div>
          <div className="flex h-[33px] shrink-0 items-center justify-between pr-2 pl-[9px]">
            <div className="flex h-[18px] gap-px overflow-hidden rounded-lg">
              <button aria-label="Browse material" className="flex w-[30px] items-center justify-center gap-[3px] bg-[#adadad]"><Ico n="material" /><Chev /></button>
              <input aria-label="Material name" defaultValue="Material.." className="w-[58px] bg-[#a6a6a6] pl-[6px] outline-none" />
              <button aria-label="Fake user" className="flex w-5 items-center justify-center bg-[#adadad] text-[#777]"><Ico n="page" className="size-[14px]" /></button>
              <button aria-label="Duplicate" className="flex w-5 items-center justify-center bg-[#adadad]"><Ico n="copy" className="size-[14px]" /></button>
              <button aria-label="Unlink" className="flex w-[19px] items-center justify-center bg-[#adadad]"><Ico n="x" className="size-3" /></button>
            </div>
            <IconDrop n="mesh" />
          </div>
          <div className="h-[2px] shrink-0" />
          <Panel title="Preview" />
          <Panel title="Surface" open />
          <div className="shrink-0 bg-[#b0b0b0] pt-[7px] pr-2 pb-[7px] pl-[9px]">
            <button className="relative mb-[15px] flex h-[19px] w-full items-center justify-center rounded border border-[#b9c5d8] bg-[#829dc6] pl-4">
              <Ico n="nodes" className="absolute left-[3px] size-[14px]" />
              Use Nodes
            </button>
            <LinkRow label="Surface" value="Mix Shader" />
            <div className="mt-[11px] flex h-[25px] items-center">
              <label htmlFor="fac" className="w-[81px] text-right">Fac</label>
              <div className="ml-[19px] flex h-[18px] w-[90px] overflow-hidden rounded-lg bg-[#929292]">
                <input id="fac" defaultValue="0.500" className="w-[71px] border border-[#bdbdbd] bg-linear-to-r from-[#858585] from-49% to-[#a9a9a9] to-49% text-center outline-none" />
                <span className="flex flex-1 items-center justify-center"><i className="size-[6px] rounded-full border border-[#222]" /></span>
              </div>
            </div>
            <LinkRow label="Shader" value="Diffuse BSDF" arrow />
            <LinkRow label="Shader" value="Principled .." arrow />
          </div>
          <Panel title="Volume" />
          <Panel title="Settings" open />
          <div className="flex-1 bg-[#b0b0b0] pt-2">
            <div className="flex h-[18px] items-center">
              <span className="w-[83px] shrink-0 text-right">Blend Mode</span>
              <Pick label="Blend Mode" value="Opaque" className="ml-3 h-[18px] w-[84px] rounded-lg bg-[#929292]" pad="pl-[6px]" />
              <i className="ml-[9px] size-1 rounded-full bg-[#222]" />
            </div>
          </div>
        </div>
      </div>
    </section>
  );
}

/* ---------- status bar ---------- */

function Mouse({ button, drag }: { button: "left" | "middle" | "right"; drag?: boolean }) {
  return (
    <svg viewBox="0 0 17 16" className="h-4 w-[17px] shrink-0" aria-hidden="true">
      <rect x="1" y="1" width="10" height="14" rx="3.500" fill="none" stroke="#222" strokeWidth="1.100" />
      {button === "left" && <path d="M6 1v6H1V4a3 3 0 0 1 3-3z" fill="#222" />}
      {button === "right" && <path d="M6 1v6h5V4a3 3 0 0 0-3-3z" fill="#222" />}
      {button === "middle" && <rect x="5" y="3" width="2" height="5" fill="#222" />}
      {drag && <path d="M13 2q2 2.500 0 5M15 1q2.500 3.500 0 7" fill="none" stroke="#222" />}
    </svg>
  );
}

function StatusBar() {
  return (
    <footer className="flex h-[21px] shrink-0 items-center bg-[#b0b0b0] pl-[11px] text-black">
      <Mouse button="left" />
      <span className="w-12 pl-[6px]">Select</span>
      <Mouse button="left" drag />
      <span className="w-[154px] pl-[7px]">Box Select</span>
      <Mouse button="middle" />
      <span className="w-[219px] pl-[6px]">Scroller Activate</span>
      <Mouse button="right" />
      <span className="pl-[6px]">Call Menu</span>
      <span className="ml-auto pr-[30px] whitespace-nowrap">
        Collection | Plane | Verts:31 | Faces:17 | Tris:34 | Objects:0/3 | Mem: 78.8 MB | v2.80.43
      </span>
    </footer>
  );
}

export default function App() {
  return (
    <div className="relative flex h-screen flex-col overflow-hidden bg-[#434343] font-['DejaVu_Sans_Condensed','DejaVu_Sans',sans-serif] text-[11px] leading-[14px]">
      <TitleBar />
      <MenuBar />
      <ToolSettings />
      <main className="flex min-h-0 flex-1 gap-[3px] pt-[2px] pr-px pb-[2px]">
        <div className="flex min-w-0 flex-1 flex-col gap-[3px]">
          <div className="flex min-h-0 flex-1 gap-[3px]">
            <Viewport />
            <NodeEditor />
          </div>
          <Timeline />
        </div>
        <div className="flex w-[235px] shrink-0 flex-col gap-[3px]">
          <Outliner />
          <Properties />
        </div>
      </main>
      <StatusBar />
      <div className="pointer-events-none absolute top-[178px] right-[3px] h-[225px] w-[357px] border-4 border-[#ed1c24]" />
    </div>
  );
}
